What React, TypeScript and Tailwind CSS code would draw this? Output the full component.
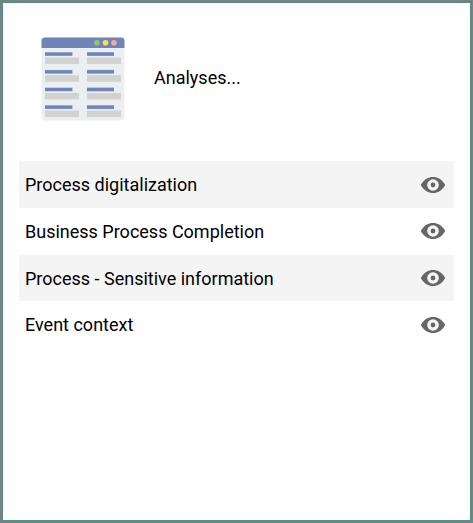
const analyses = [
  "Process digitalization",
  "Business Process Completion",
  "Process - Sensitive information",
  "Event context",
];

const lines = [0, 1, 2, 3];

const FormIcon = () => {
  return (
    <svg width="84" height="84" viewBox="0 0 84 84" className="shrink-0">
      <rect x="0.5" y="0.5" width="83" height="83" rx="3.5" fill="#eceff1" />
      <path d="M.5 11V4A3.500 3.500 0 0 1 4 .5h76A3.500 3.500 0 0 1 83.500 4v7z" fill="#6f84b9" />
      <circle cx="55.800" cy="5.700" r="2.800" fill="#91c66b" />
      <circle cx="64.500" cy="5.700" r="2.800" fill="#ffe04e" />
      <circle cx="73" cy="5.700" r="2.800" fill="#fba6a6" />
      {lines.map((line) => (
        <g key={line} transform={`translate(0 ${line * 17.7})`}>
          <rect x="4" y="15" width="28" height="4" fill="#bac5dc" />
          <rect x="46" y="15" width="27" height="4" fill="#a9b6d6" />
          <rect x="4" y="15.500" width="27" height="3.200" fill="#6f84b9" />
          <rect x="46" y="15.500" width="27" height="3.200" fill="#6f84b9" />
          <rect x="4" y="20.500" width="34" height="6.500" fill="#d2d2d2" />
          <rect x="46" y="20.500" width="34" height="6.500" fill="#d2d2d2" />
        </g>
      ))}
    </svg>
  );
};

const EyeIcon = () => {
  return (
    <svg width="24" height="16" viewBox="0 0 24 16" fill="none">
      <path
        d="M.3 7C3.300 2.500 7.300 0 12 0s8.700 2.500 11.700 7q.6 1 0 2C20.700 13.500 16.700 16 12 16S3.300 13.500.3 9q-.6-1 0-2z"
        fill="#666"
      />
      <circle cx="12" cy="8" r="4.100" stroke="#f6f6f6" strokeWidth="3.400" />
    </svg>
  );
};

const App = () => {
  return (
    <main className="h-screen border border-[#808080] bg-white font-['Roboto',sans-serif] text-[18px] text-black">
      <div className="h-full border-2 border-[#519090] px-4">
        <header className="flex h-[158px] items-start pt-[34px] pl-[22px]">
          <FormIcon />
          <h1 className="ml-[29px] leading-[82px]">Analyses...</h1>
        </header>

        <ul>
          {analyses.map((name) => (
            <li
              key={name}
              className="flex h-[46.8px] items-center justify-between pr-[9px] pl-1.5 odd:bg-[#f4f4f4]"
            >
              <span className="pt-[0.2px]">{name}</span>
              <button type="button" aria-label={name} className="pt-[0.4px]">
                <EyeIcon />
              </button>
            </li>
          ))}
        </ul>
      </div>
    </main>
  );
};

export default App;
